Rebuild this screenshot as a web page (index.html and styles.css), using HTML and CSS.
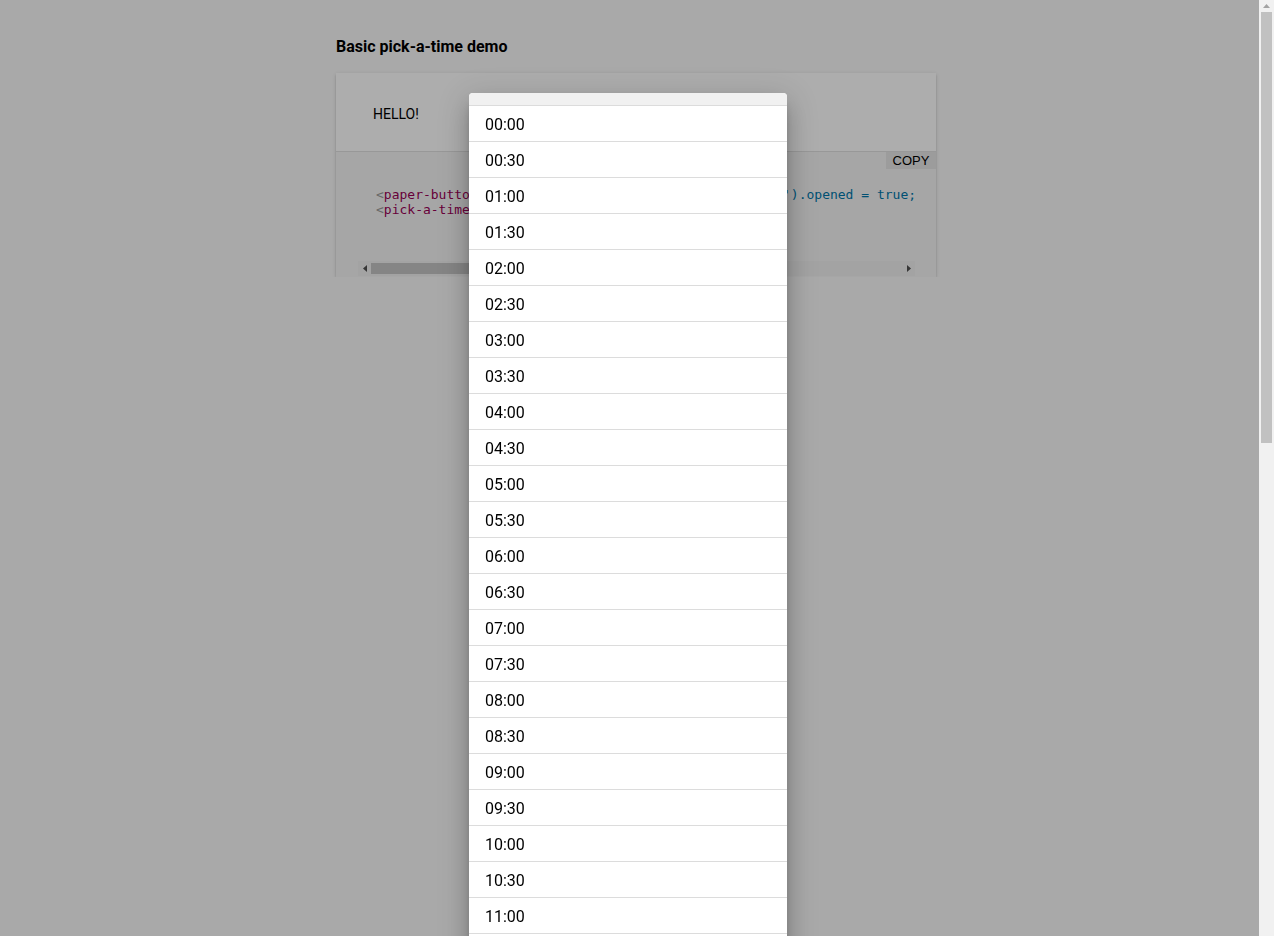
FILE: index.html
```html
<!DOCTYPE html>
<html>
<head>
<meta charset="utf-8">
<link rel="stylesheet" href="styles.css">
</head>
<body>
<div class="page">
  <div class="demo">
    <h3 class="demo-title">Basic pick-a-time demo</h3>
    <div class="card">
      <div class="card-demo">
        <span class="paper-button">HELLO!</span>
      </div>
      <div class="card-code">
        <button class="copy">COPY</button>
        <pre class="code"><span class="p">&lt;</span><span class="t">paper-button</span> <span class="a">onclick</span><span class="p">=</span><span class="v">"document.getElementById('time').opened = true;"</span><span class="p">&gt;</span>HELLO!<span class="p">&lt;/</span><span class="t">paper-button</span><span class="p">&gt;</span>
<span class="p">&lt;</span><span class="t">pick-a-time</span> <span class="a">id</span><span class="p">=</span><span class="v">"time"</span><span class="p">&gt;&lt;/</span><span class="t">pick-a-time</span><span class="p">&gt;</span></pre>
        <div class="hscroll">
          <span class="hbtn"><svg width="4" height="7" viewBox="0 0 4 7"><path d="M4 0V7L0 3.5Z" fill="#505050"/></svg></span>
          <span class="htrack"><span class="hthumb"></span></span>
          <span class="hbtn"><svg width="4" height="7" viewBox="0 0 4 7"><path d="M0 0V7L4 3.5Z" fill="#505050"/></svg></span>
        </div>
      </div>
    </div>
  </div>
</div>
<div class="backdrop"></div>
<div class="dialog">
  <div class="dialog-head"></div>
  <ul class="times">
    <li>00:00</li><li>00:30</li><li>01:00</li><li>01:30</li><li>02:00</li><li>02:30</li>
    <li>03:00</li><li>03:30</li><li>04:00</li><li>04:30</li><li>05:00</li><li>05:30</li>
    <li>06:00</li><li>06:30</li><li>07:00</li><li>07:30</li><li>08:00</li><li>08:30</li>
    <li>09:00</li><li>09:30</li><li>10:00</li><li>10:30</li><li>11:00</li><li>11:30</li>
    <li>12:00</li><li>12:30</li><li>13:00</li><li>13:30</li><li>14:00</li><li>14:30</li>
    <li>15:00</li><li>15:30</li><li>16:00</li><li>16:30</li><li>17:00</li><li>17:30</li>
    <li>18:00</li><li>18:30</li><li>19:00</li><li>19:30</li><li>20:00</li><li>20:30</li>
    <li>21:00</li><li>21:30</li><li>22:00</li><li>22:30</li><li>23:00</li><li>23:30</li>
  </ul>
</div>
<div class="vscroll">
  <span class="vbtn"><svg width="7" height="4" viewBox="0 0 7 4"><path d="M0 4H7L3.5 0Z" fill="#a3a3a3"/></svg></span>
  <span class="vthumb"></span>
</div>
</body>
</html>
```
FILE: styles.css
```css
html, body {
  margin: 0;
  padding: 0;
}
html {
  overflow: hidden;
}
body {
  background: #fafafa;
  font-family: Roboto, "Noto Sans", sans-serif;
  color: #000;
}
.demo {
  width: 600px;
  margin-left: 336px;
  padding-top: 37px;
}
.demo-title {
  margin: 0 0 17px 0;
  font-size: 16px;
  font-weight: 700;
  line-height: 19px;
}
.card {
  background: #fff;
  box-shadow: 0 2px 2px 0 rgba(0,0,0,.14), 0 1px 5px 0 rgba(0,0,0,.12), 0 3px 1px -2px rgba(0,0,0,.2);
}
.card-demo {
  height: 78px;
  display: flex;
  align-items: center;
  padding-left: 37px;
  border-bottom: 1px solid #e0e0e0;
}
.paper-button {
  font-size: 14px;
  line-height: 20px;
  padding-top: 4px;
}
.card-code {
  position: relative;
  background: #f5f5f5;
  padding: 18px 21px 1px 22px;
}
.copy {
  position: absolute;
  top: 0;
  right: 0;
  width: 50px;
  height: 17px;
  border: 0;
  padding: 0;
  margin: 0;
  background: #e6e6e6;
  font-family: "Liberation Sans", Arial, sans-serif;
  font-size: 13px;
  line-height: 17px;
  color: #000;
}
.code {
  margin: 0;
  padding: 17px 18px 44px 18px;
  overflow: hidden;
  white-space: pre;
  font-family: "DejaVu Sans Mono", monospace;
  font-size: 13px;
  line-height: 15px;
  color: #000;
}
.code .p { color: #999; }
.code .t { color: #905; }
.code .a { color: #690; }
.code .v { color: #07a; }
.hscroll {
  display: flex;
  height: 15px;
  background: #f1f1f1;
}
.hbtn {
  width: 13px;
  display: flex;
  align-items: center;
  justify-content: center;
}
.htrack {
  flex: 1;
  display: flex;
  align-items: center;
}
.hthumb {
  width: 388px;
  height: 11px;
  background: #c4c4c4;
}
.backdrop {
  position: fixed;
  top: 0;
  left: 0;
  right: 15px;
  bottom: 0;
  background: rgba(0,0,0,0.32);
}
.dialog {
  position: absolute;
  top: 93px;
  left: 469px;
  width: 318px;
  background: #fff;
  border-radius: 4px 4px 0 0;
  box-shadow: 0 16px 24px 2px rgba(0,0,0,.14), 0 6px 30px 5px rgba(0,0,0,.12), 0 8px 10px -5px rgba(0,0,0,.4);
}
.dialog-head {
  height: 12px;
  background: #f1f1f1;
  border-radius: 4px 4px 0 0;
  border-bottom: 1px solid #dcdcdc;
}
.times {
  list-style: none;
  margin: 0;
  padding: 0;
}
.times li {
  height: 34px;
  padding-top: 1px;
  line-height: 36px;
  padding-left: 16px;
  font-size: 16px;
  border-bottom: 1px solid #dcdcdc;
  color: #000;
}
.vscroll {
  position: fixed;
  top: 0;
  right: 0;
  bottom: 0;
  width: 15px;
  background: #f1f1f1;
  display: flex;
  flex-direction: column;
  align-items: center;
}
.vbtn {
  height: 12px;
  width: 15px;
  display: flex;
  align-items: center;
  justify-content: center;
}
.vthumb {
  width: 11px;
  height: 431px;
  background: #c1c1c1;
}
```
